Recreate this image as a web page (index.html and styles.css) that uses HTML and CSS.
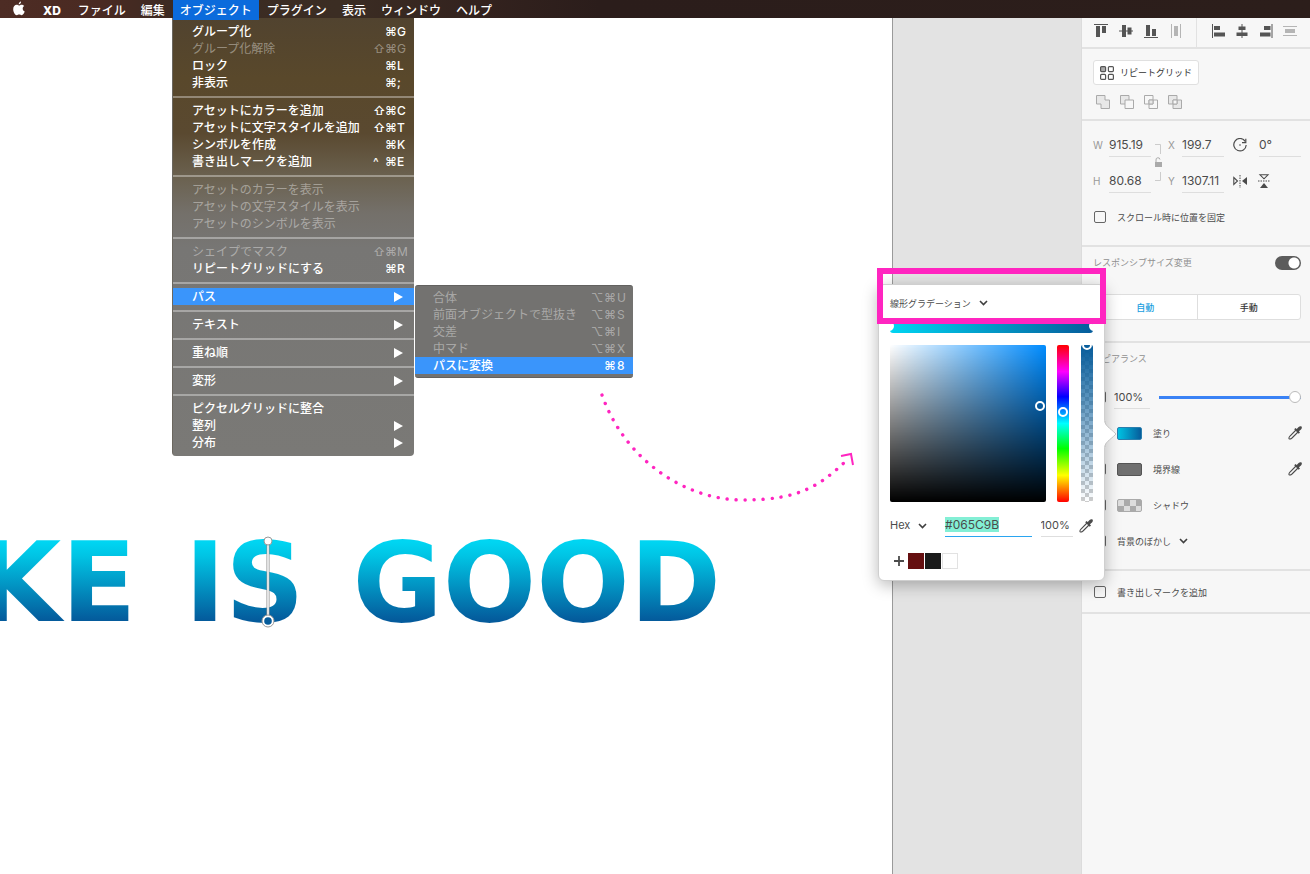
FILE: index.html
```html
<!DOCTYPE html>
<html lang="ja">
<head>
<meta charset="utf-8">
<title>XD</title>
<link rel="stylesheet" href="styles.css">
</head>
<body>
<svg class="defs" aria-hidden="true">
  <symbol id="dropper" viewBox="0 0 14 14"><path d="M8 4 2 10C1.200 11 .8 12.400 1.200 12.800S3 12.800 4 12L10 6" fill="none" stroke="#4b4b4b" stroke-width="1.100"/><path d="M6.200 3.300 7.500 2 8.700 3.100 10.600 1C11.600 0 12.900 0 13.500.6S14 2.500 13 3.400L10.900 5.300 12 6.500 10.700 7.800Z" fill="#4b4b4b"/></symbol>
  <symbol id="chevron" viewBox="0 0 9 6"><path d="M1 1 4.500 4.500 8 1" fill="none" stroke="#3f3f3f" stroke-width="1.600"/></symbol>
</svg>

<header class="menubar">
  <svg class="apple" viewBox="0 0 14 16"><path d="M9.200.6C9.300 2 8.200 3.600 6.700 3.700 6.500 2.200 7.900.8 9.200.6ZM6.900 4.700C7.600 4.700 8.500 3.900 9.800 3.900 10.900 3.900 12 4.500 12.600 5.400 10.100 6.900 10.600 10.200 13.100 11.200 12.500 12.900 11.200 15.100 9.800 15.100 8.800 15.100 8.400 14.500 7.200 14.500S5.600 15.100 4.600 15.100C2.700 15.100.8 11.800.8 8.800.8 5.800 2.600 4 4.500 4 5.600 4 6.300 4.700 6.900 4.700Z" fill="#fff"/></svg>
  <nav class="menus">
    <button class="menu app">XD</button>
    <button class="menu">ファイル</button>
    <button class="menu">編集</button>
    <button class="menu open">オブジェクト</button>
    <button class="menu">プラグイン</button>
    <button class="menu">表示</button>
    <button class="menu">ウィンドウ</button>
    <button class="menu">ヘルプ</button>
  </nav>
</header>

<main class="workspace">
  <section class="artboard">
    <div class="lettering"><span>KE</span><span>IS</span><span>GOOD</span></div>
    <svg class="grad-line" viewBox="0 0 14 94"><path d="M7 4V86" stroke="#8c8c8c" stroke-width="3"/><path d="M7 4V86" stroke="#fff" stroke-width="1.500"/><circle cx="7" cy="5" r="4" fill="#fff" stroke="#999"/><circle cx="7" cy="85" r="6" fill="#fff" stroke="#999"/><circle cx="7" cy="85" r="3.800" fill="#065c9b"/></svg>
    <svg class="dots" viewBox="0 0 270 120"><path d="M12 7C35 72 95 112 153 112S230 97 256 73" fill="none" stroke="#ff25c0" stroke-width="3.400" stroke-linecap="round" stroke-dasharray="0.100 8.900"/><path d="M251 68 261 66 263 77" fill="none" stroke="#ff25c0" stroke-width="2"/></svg>
  </section>
  <div class="pasteboard"></div>

  <aside class="panel">
    <div class="align-bar">
      <div class="align-group">
        <svg class="ico" viewBox="0 0 14 14"><path d="M0 .5H14" stroke="#555"/><path d="M2 2H6V13H2ZM8 2H12V9H8Z" fill="#555"/></svg>
        <svg class="ico" viewBox="0 0 14 14"><path d="M0 7H14" stroke="#555"/><path d="M3 1H7V13H3ZM8.500 3.500H12.500V10.500H8.500Z" fill="#555"/></svg>
        <svg class="ico" viewBox="0 0 14 14"><path d="M0 13.500H14" stroke="#555"/><path d="M2 1H6V12H2ZM8 5H12V12H8Z" fill="#555"/></svg>
        <svg class="ico" viewBox="0 0 14 14"><path d="M2.500 0V14M11.500 0V14" stroke="#b5b5b5"/><path d="M5 2H9V12H5Z" fill="#b5b5b5"/></svg>
      </div>
      <div class="align-group">
        <svg class="ico" viewBox="0 0 14 14"><path d="M1.500 0V14" stroke="#555"/><path d="M3 2H9V6H3ZM3 8.500H14V12.500H3Z" fill="#555"/></svg>
        <svg class="ico" viewBox="0 0 14 14"><path d="M7 0V14" stroke="#555"/><path d="M3.500 2.500H10.500V6H3.500ZM1.500 8.500H12.500V12H1.500Z" fill="#555"/></svg>
        <svg class="ico" viewBox="0 0 14 14"><path d="M13 0V14" stroke="#555"/><path d="M5 2H11.500V6H5ZM1 8.500H11.500V12.500H1Z" fill="#555"/></svg>
        <svg class="ico" viewBox="0 0 14 14"><path d="M0 2.500H14M0 11.500H14" stroke="#b5b5b5"/><path d="M2 5H12V9H2Z" fill="#b5b5b5"/></svg>
      </div>
    </div>

    <div class="section repeat">
      <button class="repeat-btn"><svg class="ico" viewBox="0 0 14 14"><g fill="none" stroke="#555" stroke-width="1.200"><rect x=".6" y=".6" width="5" height="5" rx="1" fill="#aaa"/><rect x="8.400" y=".6" width="5" height="5" rx="1"/><rect x=".6" y="8.400" width="5" height="5" rx="1"/><rect x="8.400" y="8.400" width="5" height="5" rx="1"/></g></svg>リピートグリッド</button>
      <div class="bools">
        <svg class="ico" viewBox="0 0 14 14"><path d="M.5.500H9V5H13.500V13.500H5V9H.5Z" fill="#e8e8e8" stroke="#aaa"/></svg>
        <svg class="ico" viewBox="0 0 14 14"><path d="M.5.500H9V9H.5Z" fill="#e8e8e8" stroke="#aaa"/><path d="M5 5H13.500V13.500H5Z" fill="#f7f7f7" stroke="#aaa"/></svg>
        <svg class="ico" viewBox="0 0 14 14"><path d="M.5.500H9V9H.5ZM5 5H13.500V13.500H5Z" fill="none" stroke="#aaa"/><path d="M5 5H9V9H5Z" fill="#e8e8e8" stroke="#aaa"/></svg>
        <svg class="ico" viewBox="0 0 14 14"><path d="M.5.500H9V9H.5ZM5 5H13.500V13.500H5Z" fill="#e8e8e8" stroke="#aaa"/><path d="M5 5H9V9H5Z" fill="#f7f7f7" stroke="#aaa"/></svg>
      </div>
    </div>

    <div class="section transform">
      <div class="fields">
        <label for="w">W</label><input id="w" value="915.19">
        <svg class="lock" viewBox="0 0 8 38"><path d="M1 .5H6.500V10M6.500 28V36.500H1" fill="none" stroke="#ccc"/><path d="M1 18H8V23H1Z" fill="#aaa"/><path d="M2 18V16A2 2 0 0 1 6 15.500" fill="none" stroke="#aaa"/></svg>
        <label for="x">X</label><input id="x" value="199.7">
        <svg class="ico" viewBox="0 0 14 14"><path d="M12.200 3.300A6.200 6.200 0 1 0 13.200 7" fill="none" stroke="#4b4b4b" stroke-width="1.200"/><path d="M12.800.8V4.600H9" fill="none" stroke="#4b4b4b" stroke-width="1.200"/><circle cx="7" cy="7" r=".8" fill="#4b4b4b"/></svg>
        <input id="rot" value="0°" aria-label="回転">
        <label for="h">H</label><input id="h" value="80.68">
        <label class="col-y" for="y">Y</label><input id="y" value="1307.11">
        <svg class="ico" viewBox="0 0 14 14"><path d="M.8 3.500 4.500 7 .8 10.500Z" fill="none" stroke="#4b4b4b" stroke-width="1.100"/><path d="M14 3V11L9 7Z" fill="#4b4b4b"/><path d="M7 1V14" stroke="#4b4b4b" stroke-dasharray="1.500 1"/></svg>
        <svg class="ico flip" viewBox="0 0 14 14"><path d="M3 .8H11L7 4.800Z" fill="none" stroke="#4b4b4b" stroke-width="1.100"/><path d="M3 14H11L7 9Z" fill="#4b4b4b"/><path d="M1 7H13" stroke="#4b4b4b" stroke-dasharray="1.500 1"/></svg>
      </div>
      <label class="check"><input type="checkbox">スクロール時に位置を固定</label>
    </div>

    <div class="section responsive">
      <div class="head"><label class="title" for="resp">レスポンシブサイズ変更</label><input type="checkbox" class="toggle" id="resp" checked></div>
      <div class="seg"><button class="on">自動</button><button>手動</button></div>
    </div>

    <div class="section look">
      <h2 class="title">アピアランス</h2>
      <div class="row"><input type="checkbox" aria-label="不透明度"><input class="opacity" value="100%" aria-label="不透明度の値"><input type="range" class="range" value="100" aria-label="不透明度スライダー"></div>
      <div class="row"><input type="checkbox" id="fill" checked><i class="chip fill"></i><label for="fill">塗り</label><svg class="ico end"><use href="#dropper"/></svg></div>
      <div class="row"><input type="checkbox" id="stroke"><i class="chip stroke"></i><label for="stroke">境界線</label><svg class="ico end"><use href="#dropper"/></svg></div>
      <div class="row"><input type="checkbox" id="shadow"><i class="chip shadow"></i><label for="shadow">シャドウ</label></div>
      <div class="row"><input type="checkbox" id="blur"><label for="blur">背景のぼかし</label><svg class="chev"><use href="#chevron"/></svg></div>
    </div>

    <div class="section export"><label class="check"><input type="checkbox">書き出しマークを追加</label></div>
  </aside>
</main>

<div class="dropdown">
  <div class="item">グループ化<kbd><b>⌘</b><b>G</b></kbd></div>
  <div class="item off">グループ化解除<kbd><b>⇧</b><b>⌘</b><b>G</b></kbd></div>
  <div class="item">ロック<kbd><b>⌘</b><b>L</b></kbd></div>
  <div class="item">非表示<kbd><b>⌘</b><b>;</b></kbd></div>
  <hr>
  <div class="item">アセットにカラーを追加<kbd><b>⇧</b><b>⌘</b><b>C</b></kbd></div>
  <div class="item">アセットに文字スタイルを追加<kbd><b>⇧</b><b>⌘</b><b>T</b></kbd></div>
  <div class="item">シンボルを作成<kbd><b>⌘</b><b>K</b></kbd></div>
  <div class="item">書き出しマークを追加<kbd><b>^</b><b>⌘</b><b>E</b></kbd></div>
  <hr>
  <div class="item off">アセットのカラーを表示</div>
  <div class="item off">アセットの文字スタイルを表示</div>
  <div class="item off">アセットのシンボルを表示</div>
  <hr>
  <div class="item off">シェイプでマスク<kbd><b>⇧</b><b>⌘</b><b>M</b></kbd></div>
  <div class="item">リピートグリッドにする<kbd><b>⌘</b><b>R</b></kbd></div>
  <hr>
  <div class="item active">パス<i class="tri"></i></div>
  <hr>
  <div class="item">テキスト<i class="tri"></i></div>
  <hr>
  <div class="item">重ね順<i class="tri"></i></div>
  <hr>
  <div class="item">変形<i class="tri"></i></div>
  <hr>
  <div class="item">ピクセルグリッドに整合</div>
  <div class="item">整列<i class="tri"></i></div>
  <div class="item">分布<i class="tri"></i></div>
</div>

<div class="dropdown sub">
  <div class="item off">合体<kbd><b>⌥</b><b>⌘</b><b>U</b></kbd></div>
  <div class="item off">前面オブジェクトで型抜き<kbd><b>⌥</b><b>⌘</b><b>S</b></kbd></div>
  <div class="item off">交差<kbd><b>⌥</b><b>⌘</b><b>I</b></kbd></div>
  <div class="item off">中マド<kbd><b>⌥</b><b>⌘</b><b>X</b></kbd></div>
  <div class="item active">パスに変換<kbd><b>⌘</b><b>8</b></kbd></div>
</div>

<div class="picker">
  <svg class="pointer" viewBox="0 0 13 28"><path d="M0 0C1 6 5 7 12 14 5 21 1 22 0 28Z" fill="#fff"/><path d="M1 1C1 6 5 7 12 14 5 21 1 22 1 27" fill="none" stroke="#c4c4c4"/></svg>
  <button class="kind">線形グラデーション<svg class="chev"><use href="#chevron"/></svg></button>
  <div class="stops"><i></i><i></i></div>
  <div class="fieldset">
    <div class="sb"><i class="ring"></i></div>
    <div class="hue"><i class="ring"></i></div>
    <div class="alpha"><i class="ring"></i></div>
  </div>
  <div class="values">
    <button class="mode">Hex<svg class="chev"><use href="#chevron"/></svg></button>
    <div class="hex" contenteditable="true" role="textbox" aria-label="カラーコード"><mark>#065C9B</mark></div>
    <input class="pct" value="100%" aria-label="アルファ">
    <svg class="ico"><use href="#dropper"/></svg>
  </div>
  <div class="swatches">
    <button class="add" aria-label="追加"><svg viewBox="0 0 10 10"><path d="M5 0V10M0 5H10" stroke="#4b4b4b" stroke-width="1.800"/></svg></button>
    <i class="sw red"></i><i class="sw black"></i><i class="sw white"></i>
  </div>
</div>
<div class="callout"></div>
</body>
</html>
```

FILE: styles.css
```css
* { box-sizing: border-box; }
body {
  margin: 0;
  min-height: 100vh;
  display: flex;
  flex-direction: column;
  position: relative;
  overflow: hidden;
  background: #fff;
  color: #4b4b4b;
  font: 12px/17px Inter, "Noto Sans CJK JP", sans-serif;
}
button, input { font: inherit; color: inherit; border: 0; padding: 0; margin: 0; background: none; min-width: 0; }
svg { display: block; flex: none; }
i, b, kbd { font: inherit; }
.defs { position: absolute; width: 0; height: 0; }
.ico { width: 14px; height: 14px; }
.chev { width: 9px; height: 6px; }

/* menu bar */
.menubar {
  height: 18px;
  position: relative;
  z-index: 2;
  display: flex;
  align-items: flex-start;
  padding-left: 12px;
  gap: 10px;
  color: #fff;
  background: linear-gradient(90deg, #4d2c24 0, #4a2a22 100px, #3b2a22 180px, #3b2d23 340px, #33221e 480px, #2b1d1b 600px, #2c1e1b 100%);
}
.apple { width: 14px; height: 15px; margin-top: 1px; }
.menus { display: flex; gap: 1px; }
.menu { height: 20px; padding: 0 7px; font-weight: 500; white-space: nowrap; }
.menu.app { font-weight: 800; margin-right: 2px; }
.menu.open { background: #0b6bdc; }

/* canvas */
.workspace { flex: 1; display: flex; }
.artboard { flex: 1; position: relative; overflow: hidden; }
.pasteboard { width: 189px; background: #e3e3e3; border-left: 1px solid #9a9a9a; }
.lettering {
  position: absolute;
  left: -24px;
  top: 510px;
  display: flex;
  gap: 48px;
  font: 700 110px/110px "DejaVu Sans", sans-serif;
  color: transparent;
  background: linear-gradient(#00d5f2 14px, #00c4e4 28px, #045b9c 92px);
  -webkit-background-clip: text;
  background-clip: text;
}
.grad-line { position: absolute; left: 261px; top: 518px; width: 14px; height: 94px; }
.dots { position: absolute; left: 590px; top: 370px; width: 270px; height: 120px; }

/* drop-down menus */
.dropdown {
  position: absolute;
  left: 172px;
  top: 18px;
  width: 242px;
  padding: 5px 0;
  color: #fff;
  font-weight: 500;
  border-left: 1px solid #6b675f;
  border-radius: 0 0 4px 4px;
  background: linear-gradient(#51432f 0, #59482b 60px, #5a4930 115px, #6b6250 160px, #74706a 195px, #777674 230px, #7a7976 100%);
}
.item { height: 17px; display: flex; align-items: center; padding: 0 5px 0 19px; white-space: nowrap; }
.item.off { color: rgba(255, 255, 255, 0.4); font-weight: 400; }
.item.active { background: #3a95fb; }
.dropdown hr { margin: 0; border: 0; height: 11px; padding: 5px 0 4px; background: rgba(255, 255, 255, 0.35) content-box; }
kbd { margin-left: auto; display: flex; }
kbd b { width: 12px; }
.tri { margin: 0 9px 0 auto; border-left: 9px solid #fff; border-top: 5px solid transparent; border-bottom: 5px solid transparent; }
.item:has(.tri) { padding-right: 2px; }
.dropdown.sub {
  left: 415px;
  top: 285px;
  width: 218px;
  padding: 3px 0;
  border: 1px solid #62615f;
  border-width: 1px 0;
  border-radius: 3px;
  background: #737270;
}
.sub .item { padding: 0 3px 0 18px; }
.sub kbd b { width: 13px; }

/* property panel */
.panel { width: 229px; background: #f7f7f7; border-left: 1px solid #dcdcdc; font-size: 9px; }
.align-bar { height: 31px; display: flex; border-bottom: 2px solid #e2e2e2; }
.align-group { display: flex; gap: 11px; align-items: center; padding: 0 13px 3px 12px; }
.align-group + .align-group { border-left: 1px solid #e2e2e2; padding: 0 0 3px 14px; gap: 10px; }
.section { border-bottom: 2px solid #e2e2e2; padding: 0 9px 0 11px; }
.repeat { height: 72px; padding-top: 11px; }
.repeat-btn { display: flex; align-items: center; gap: 6px; height: 25px; padding: 0 6px; background: #fff; border: 1px solid #e0e0e0; border-radius: 3px; color: #333; white-space: nowrap; }
.bools { display: flex; gap: 10px; padding: 10px 3px; }
.transform { height: 126px; padding-top: 12px; }
.fields { display: grid; grid-template-columns: 16px 42px 17px 14px 42px 9px 14px 12px 42px; grid-template-rows: 24px 24px; row-gap: 12px; align-items: center; }
.fields label { color: #999; font-size: 10px; line-height: 24px; }
.fields input { width: 42px; height: 24px; font-size: 12px; border-bottom: 1px solid #dedede; }
.fields .lock { width: 8px; height: 38px; grid-column: 3; grid-row: 1 / 3; margin-left: 3px; }
.fields label[for="x"], .fields .col-y { grid-column: 4; }
.fields .ico { grid-column: 7; }
.fields #rot { grid-column: 9; }
.fields .ico.flip { grid-column: 8 / 10; margin-left: 10px; }
.check { display: flex; align-items: center; gap: 11px; height: 18px; }
.transform .check { margin-top: 15px; }
input[type="checkbox"] { appearance: none; width: 12px; height: 12px; margin-left: 1px; border: 1px solid #666; border-radius: 2px; flex: none; }
.responsive { height: 96px; padding-top: 7px; }
.head { display: flex; align-items: center; justify-content: space-between; height: 18px; }
.title { margin: 0; font-size: 9px; font-weight: 400; color: #909090; line-height: 18px; }
input.toggle[type="checkbox"] { width: 26px; height: 14px; border: 0; border-radius: 7px; background: radial-gradient(circle at 19px 7px, #fff 5px, #5c5c5c 6px); }
.seg { display: flex; height: 26px; margin-top: 22px; border: 1px solid #dedede; border-radius: 3px; background: #fff; }
.seg button { flex: 1; color: #333; font-weight: 500; }
.seg button + button { border-left: 1px solid #dedede; }
.seg .on { color: #189ee0; }
.look { height: 228px; padding-top: 7px; }
.row { height: 36px; display: flex; align-items: center; gap: 11px; }
.title + .row { margin-top: 11px; }
.row .opacity { width: 36px; height: 24px; margin-left: -3px; font-size: 11px; border-bottom: 1px solid #dedede; }
.range { appearance: none; flex: 1; height: 13px; background: linear-gradient(#3a82f5, #3a82f5) center / 100% 3px no-repeat; margin-left: -2px; }
.range::-webkit-slider-thumb { appearance: none; width: 12px; height: 12px; border-radius: 50%; background: #fff; border: 1px solid #bbb; }
.chip { width: 25px; height: 13px; border: 1px solid #777; border-radius: 2px; }
.chip.fill { border-color: #2a7fae; background: linear-gradient(90deg, #00c4e4, #065c9b); }
.chip.stroke { background: #707070; border-color: #555; }
.chip.shadow { border-color: #aaa; background: repeating-conic-gradient(#aaa 0 25%, #ddd 0 50%) 0 0 / 12px 12px; }
.end { margin-left: auto; margin-right: -1px; }
.row .chev { margin-left: -3px; }
.export { height: 43px; padding-top: 12px; }

/* colour picker */
.picker {
  position: absolute;
  right: 205px;
  top: 284px;
  width: 227px;
  padding: 9px 11px 11px;
  background: #fff;
  border: 1px solid #cfcfcf;
  border-radius: 6px;
  box-shadow: 0 4px 16px rgba(0, 0, 0, 0.28);
}
.pointer { position: absolute; right: -13px; top: 135px; width: 13px; height: 28px; }
.kind, .mode { display: flex; align-items: center; gap: 8px; height: 18px; white-space: nowrap; }
.kind { font-size: 9px; }
.stops { height: 11px; margin: 10px 0 12px; display: flex; justify-content: space-between; overflow: hidden; border-radius: 3px; background: linear-gradient(90deg, #00d5f2, #065c9b); }
.stops i { width: 10px; height: 10px; border-radius: 50%; background: #fff; margin: -1px -6px; }
.fieldset { display: flex; gap: 11px; height: 157px; }
.fieldset div { position: relative; border-radius: 2px; width: 12px; }
.fieldset .sb { width: 157px; background: linear-gradient(transparent, #000), linear-gradient(90deg, #fff, #008cff); }
.fieldset .hue { background: linear-gradient(red, #f0f 17%, #00f 33%, #0ff 50%, #0f0 66%, #ff0 83%, red); }
.fieldset .alpha { overflow: hidden; background: linear-gradient(#065c9b, rgba(6, 92, 155, 0)), repeating-conic-gradient(#fff 0 25%, #ccc 0 50%) 0 0 / 8px 8px; margin-left: 1px; }
.ring { position: absolute; width: 10px; height: 10px; border: 2px solid #fff; border-radius: 50%; }
.sb .ring { left: 145px; top: 56px; }
.hue .ring { left: 1px; top: 62px; }
.alpha .ring { left: 1px; top: -5px; }
.values { display: flex; align-items: center; height: 23px; margin-top: 12px; font-size: 11px; }
.mode { width: 56px; }
.hex { width: 88px; height: 23px; font-size: 12px; line-height: 22px; border-bottom: 1px solid #2aa5f0; }
.hex mark { background: #83efd5; color: inherit; }
.pct { width: 33px; height: 23px; margin: 0 6px 0 9px; border-bottom: 1px solid #dedede; }
.swatches { display: flex; gap: 1px; align-items: center; height: 16px; margin-top: 16px; }
.add { width: 10px; height: 10px; margin: 0 3px 0 4px; }
.add svg { width: 10px; height: 10px; }
.sw { width: 16px; height: 16px; background: #650f10; }
.sw.black { background: #1b1b1b; }
.sw.white { background: #fff; border: 1px solid #e2e2e2; }
.callout { position: absolute; right: 204px; top: 268px; width: 229px; height: 56px; border: 6px solid #ff25c0; }
```
